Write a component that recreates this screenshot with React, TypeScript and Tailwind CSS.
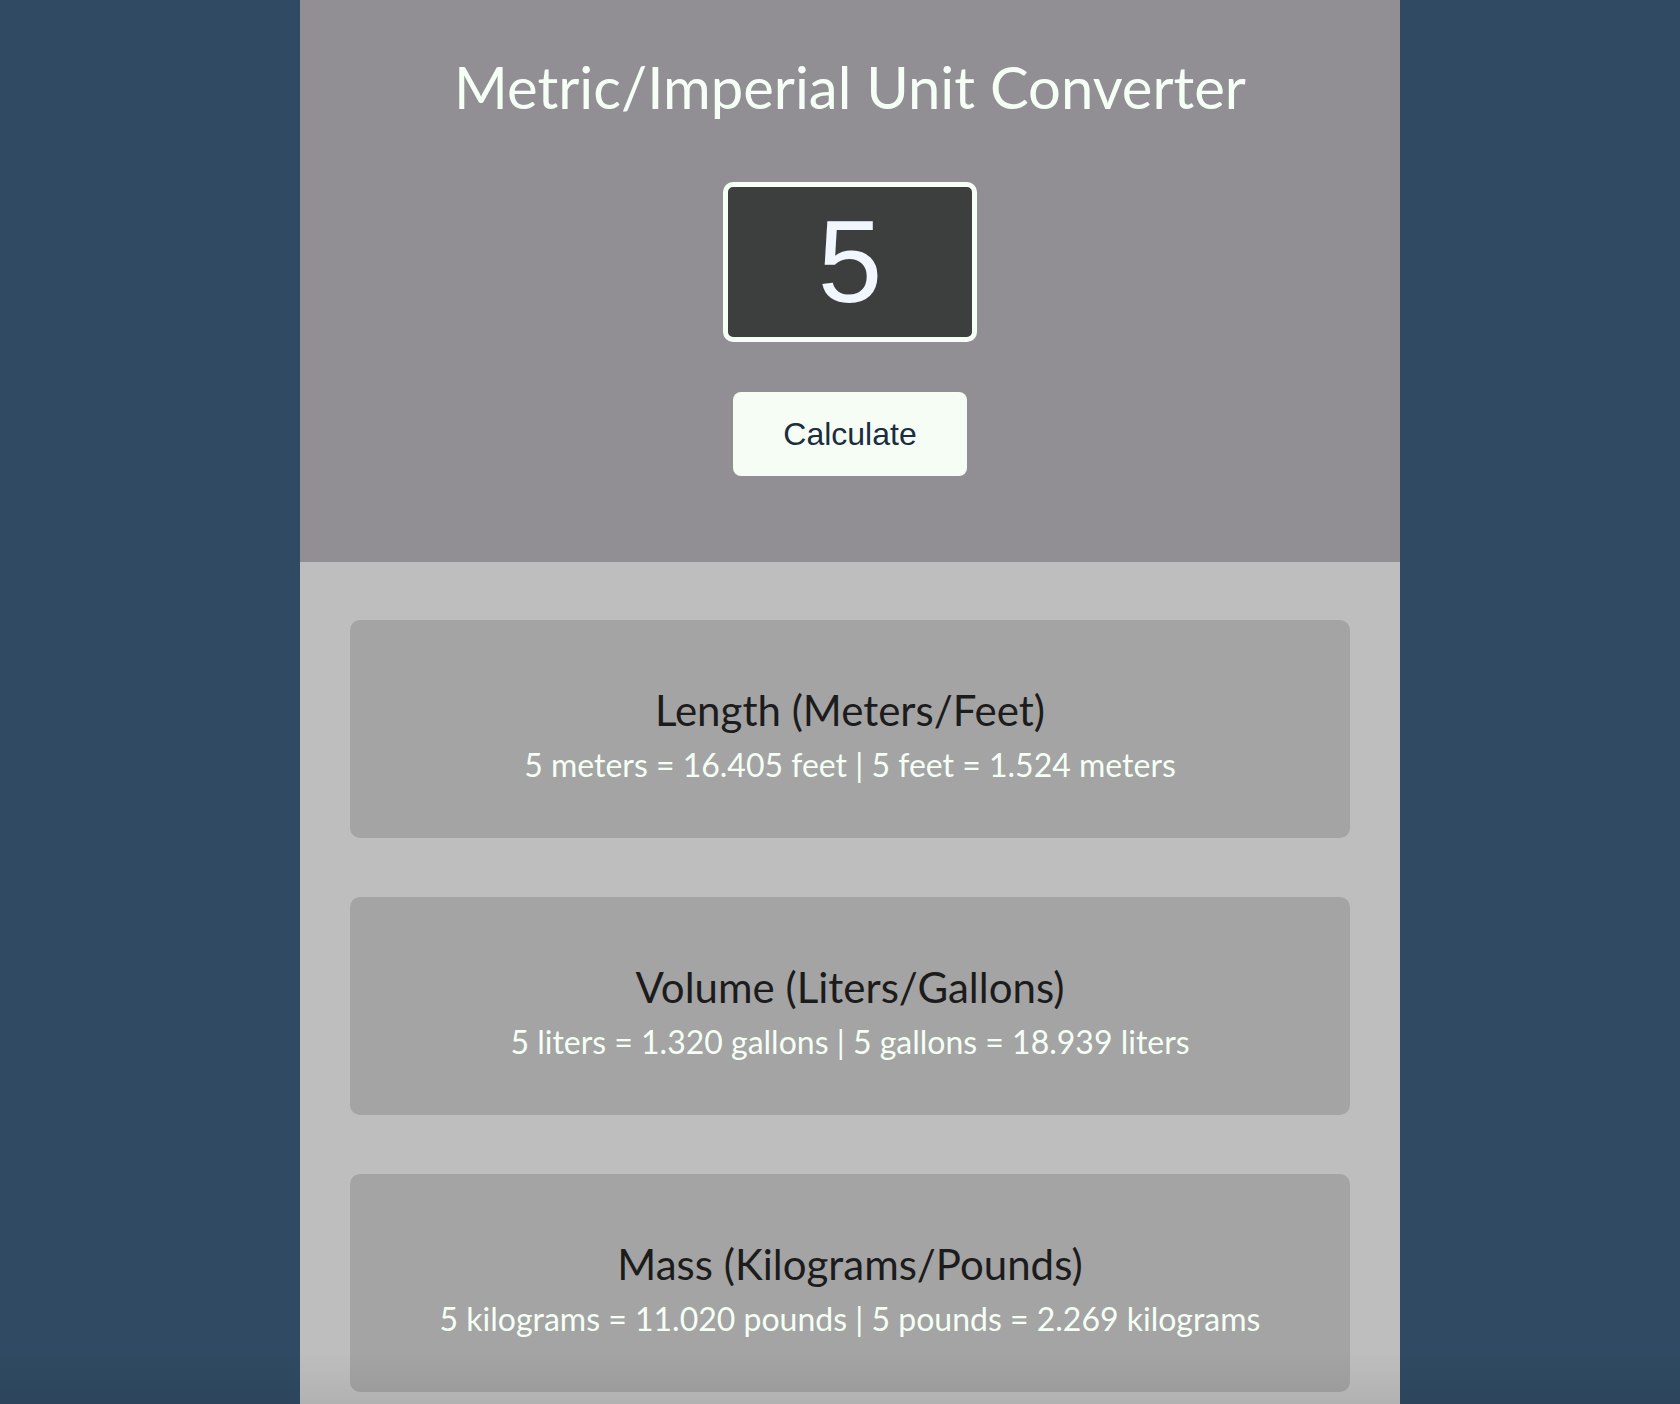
const results = [
  {
    title: "Length (Meters/Feet)",
    text: "5 meters = 16.405 feet | 5 feet = 1.524 meters",
  },
  {
    title: "Volume (Liters/Gallons)",
    text: "5 liters = 1.320 gallons | 5 gallons = 18.939 liters",
  },
  {
    title: "Mass (Kilograms/Pounds)",
    text: "5 kilograms = 11.020 pounds | 5 pounds = 2.269 kilograms",
  },
];

export default function App() {
  return (
    <div className="relative min-h-[1404px] overflow-hidden bg-[#2f4a62] font-['Lato','Open_Sans',sans-serif]">
      <div className="ml-[300px] w-[1100px]">
        <header className="flex h-[562px] flex-col items-center bg-[#918f94] pt-[43px]">
          <h1 className="text-[58px] leading-[88px] text-[#f5fff5]">Metric/Imperial Unit Converter</h1>
          <input
            type="text"
            defaultValue="5"
            className="mt-[51px] h-[160px] w-[254px] rounded-[10px] border-[5px] border-[#f5fff5] bg-[#3d3f3f] text-center font-['Liberation_Sans',Arial,sans-serif] text-[116px] text-[#f2f6ff] outline-none"
          />
          <button className="mt-[50px] h-[84px] w-[234px] rounded-[8px] bg-[#f6fdf5] font-['Liberation_Sans',Arial,sans-serif] text-[32px] text-[#1b2d3e]">
            Calculate
          </button>
        </header>
        <main className="flex flex-col gap-[59px] bg-[#bebebe] px-[50px] pt-[58px] pb-[40px]">
          {results.map((r) => (
            <section
              key={r.title}
              className="flex h-[218px] flex-col items-center justify-center rounded-[10px] bg-[#a4a4a4] pt-[12px]"
            >
              <h2 className="text-[42px] leading-[60px] text-[#1c1c1c]">{r.title}</h2>
              <p className="text-[32px] leading-[50px] text-[#f5fff5]">{r.text}</p>
            </section>
          ))}
        </main>
      </div>
      <div className="pointer-events-none absolute inset-x-0 bottom-0 h-[80px] bg-gradient-to-b from-transparent to-black/10" />
    </div>
  );
}
